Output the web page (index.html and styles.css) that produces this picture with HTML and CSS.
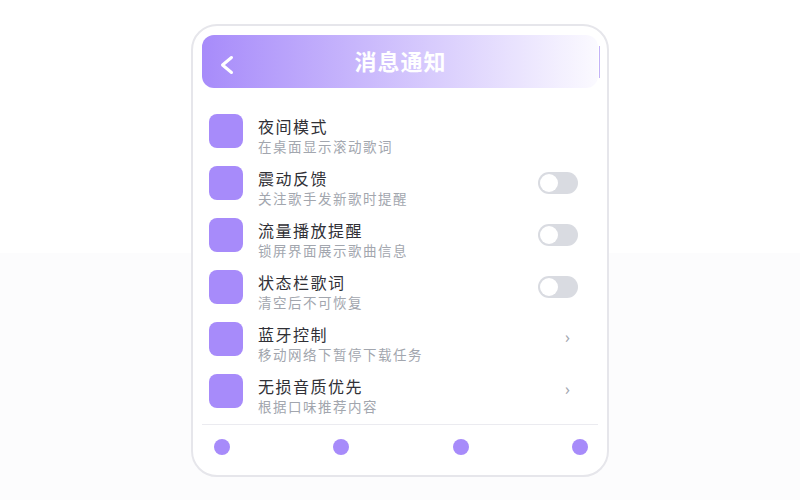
FILE: index.html
```html
<!DOCTYPE html>
<html lang="zh-CN">
<head>
  <meta charset="UTF-8">
  <meta name="viewport" content="width=device-width, initial-scale=1.0">
  <title>消息通知</title>
  <link rel="stylesheet" href="styles.css">
</head>
<body>
  <div class="phone">
    <div class="header">
      <button class="back">
        <svg width="14" height="20" viewBox="0 0 14 20"><polyline points="11.5,2.5 2.5,10 11.5,17.5" fill="none" stroke="#fff" stroke-width="3" stroke-linecap="round" stroke-linejoin="round"/></svg>
      </button>
      <h1 class="title">消息通知</h1>
      <span class="edge"></span>
    </div>
    <ul class="list">
      <li class="row">
        <span class="icon"></span>
        <div class="text"><div class="name">夜间模式</div><div class="desc">在桌面显示滚动歌词</div></div>
      </li>
      <li class="row">
        <span class="icon"></span>
        <div class="text"><div class="name">震动反馈</div><div class="desc">关注歌手发新歌时提醒</div></div>
        <span class="switch"></span>
      </li>
      <li class="row">
        <span class="icon"></span>
        <div class="text"><div class="name">流量播放提醒</div><div class="desc">锁屏界面展示歌曲信息</div></div>
        <span class="switch"></span>
      </li>
      <li class="row">
        <span class="icon"></span>
        <div class="text"><div class="name">状态栏歌词</div><div class="desc">清空后不可恢复</div></div>
        <span class="switch"></span>
      </li>
      <li class="row">
        <span class="icon"></span>
        <div class="text"><div class="name">蓝牙控制</div><div class="desc">移动网络下暂停下载任务</div></div>
        <span class="arrow">›</span>
      </li>
      <li class="row">
        <span class="icon"></span>
        <div class="text"><div class="name">无损音质优先</div><div class="desc">根据口味推荐内容</div></div>
        <span class="arrow">›</span>
      </li>
    </ul>
    <div class="nav">
      <span class="dot"></span>
      <span class="dot"></span>
      <span class="dot"></span>
      <span class="dot"></span>
    </div>
  </div>
</body>
</html>
```
FILE: styles.css
```css
html{
  background: linear-gradient(#fff 253px, #fcfcfd 253px);
  height: 100%;
}
body{
  margin: 0;
  display: flex;
  justify-content: center;
  font-family: "Noto Sans", "Noto Sans CJK SC", sans-serif;
}
.phone{
  margin-top: 24px;
  width: 418px;
  box-sizing: border-box;
  border: 2px solid #e6e6eb;
  border-radius: 26px;
  background-color: #fff;
  padding: 9px 9px 6px;
  display: flex;
  flex-direction: column;
}
/* 顶部标题栏 */
.header{
  height: 53px;
  border-radius: 12px;
  background: linear-gradient(to right, #a78bfa, #fbfaff);
  display: flex;
  align-items: center;
}
.back{
  width: 40px;
  height: 53px;
  padding: 0 0 0 18px;
  margin-top: 6px;
  border: none;
  background: none;
  display: flex;
  align-items: center;
}
.title{
  flex: 1;
  margin: -4px 0 0 -40px;
  text-align: center;
  color: #fff;
  font-size: 22px;
  font-weight: 700;
  letter-spacing: 1px;
}
.edge{
  width: 1px;
  height: 32px;
  margin-right: -2px;
  background-color: #c3b3f7;
}
/* 设置列表 */
.list{
  list-style: none;
  margin: 0;
  padding: 26px 0 8px;
  display: flex;
  flex-direction: column;
  gap: 10px;
}
.row{
  display: flex;
  align-items: flex-start;
  padding: 0 20px 0 7px;
}
.icon{
  width: 34px;
  height: 34px;
  border-radius: 8px;
  background-color: #a78bfa;
  flex: none;
}
.text{
  flex: 1;
  margin-left: 15px;
  padding-top: 2px;
}
.name{
  font-size: 16px;
  line-height: 22px;
  letter-spacing: 1.5px;
  color: #303036;
}
.desc{
  font-size: 13.5px;
  line-height: 18px;
  letter-spacing: 1.5px;
  color: #a2a6ae;
}
.switch{
  width: 40px;
  height: 22px;
  margin-top: 6px;
  border-radius: 11px;
  background-color: #d9dbe1;
  position: relative;
}
.switch::after{
  content: "";
  position: absolute;
  left: 2px;
  top: 2px;
  width: 18px;
  height: 18px;
  border-radius: 50%;
  background-color: #fff;
}
.arrow{
  margin: 4px 8px 0 0;
  font-size: 16px;
  line-height: 22px;
  color: #a4a7b0;
}
/* 底部导航 */
.nav{
  height: 44px;
  border-top: 1px solid #ebebf0;
  display: flex;
  justify-content: space-between;
  align-items: center;
  padding: 0 10px 0 12px;
}
.dot{
  width: 16px;
  height: 16px;
  border-radius: 50%;
  background-color: #a78bfa;
}
```
